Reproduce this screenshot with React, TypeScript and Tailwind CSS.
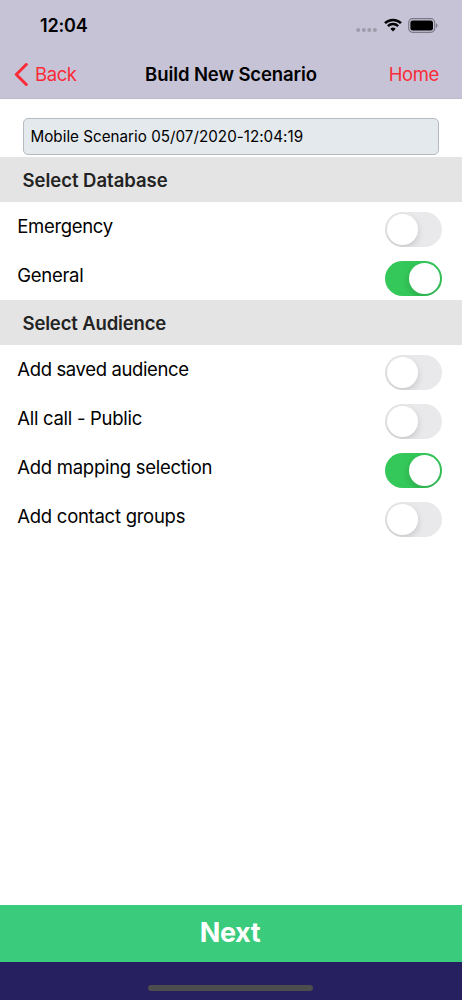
import React, { useState } from 'react';

const databases = [
  { id: 'emergency', label: 'Emergency', on: false, tracking: 'tracking-[-0.33px]' },
  { id: 'general', label: 'General', on: true, tracking: 'tracking-[-0.3px]' },
];

const audiences = [
  { id: 'saved', label: 'Add saved audience', on: false, tracking: 'tracking-[-0.37px]' },
  { id: 'public', label: 'All call - Public', on: false, tracking: 'tracking-[-0.29px]' },
  { id: 'mapping', label: 'Add mapping selection', on: true, tracking: 'tracking-[-0.28px]' },
  { id: 'groups', label: 'Add contact groups', on: false, tracking: 'tracking-[-0.27px]' },
];

const StatusBar: React.FC = () => {
  return <div className="flex h-[50px] items-center justify-between pl-10 pr-[24px]">
      <span className="pt-[2px] text-[18px] font-semibold leading-none tracking-[-0.2px]">12:04</span>
      <div className="flex items-center">
        <svg className="mt-[9px] h-[5px] w-[22px]" viewBox="0 0 22 5" fill="#9e9bab">
          <circle cx="2.2" cy="2.9" r="2" />
          <circle cx="7.8" cy="2.9" r="2" />
          <circle cx="13.3" cy="2.9" r="2" />
          <circle cx="18.9" cy="2.9" r="2" />
        </svg>
        <svg className="ml-[5.5px] h-[14px] w-[18px]" viewBox="0 0 18 14" fill="none" stroke="#000" strokeWidth="2.5">
          <path d="M1 5.2a11.3 11.3 0 0 1 16 0" />
          <path d="M3.9 8.2a7.2 7.2 0 0 1 10.2 0" />
          <path d="M9 13.5 6.3 10.8a3.8 3.8 0 0 1 5.4 0Z" fill="#000" stroke="none" />
        </svg>
        <svg className="ml-[6.5px] h-[15px] w-[30px]" viewBox="0 0 30 15">
          <rect x="0.7" y="0.7" width="26" height="13.6" rx="4" fill="none" stroke="#7b7986" strokeWidth="1.2" />
          <rect x="2.4" y="2.4" width="22.6" height="10.2" rx="2.4" fill="#000" />
          <path d="M28 5.2c2 .8 2 3.8 0 4.6Z" fill="#7b7986" />
        </svg>
      </div>
    </div>;
};

const NavBar: React.FC = () => {
  return <div className="grid h-[49px] grid-cols-[1fr_auto_1fr] items-center px-[14px] text-[18.5px] leading-none">
      <button className="flex items-center gap-[7px] text-[#fb2b37]">
        <svg className="h-6 w-[14px]" viewBox="0 0 14 24" fill="none" stroke="currentColor" strokeWidth="3" strokeLinecap="round" strokeLinejoin="round">
          <path d="M12.3 1.5 2.3 11.5l10 10" />
        </svg>
        <span className="tracking-[-0.4px]">Back</span>
      </button>
      <h1 className="text-[18.5px] font-semibold tracking-[-0.1px]">Build New Scenario</h1>
      <button className="mr-[9px] justify-self-end tracking-[-0.4px] text-[#fb2b37]">Home</button>
    </div>;
};

const SectionHeader: React.FC<{ title: string; className: string }> = ({ title, className }) => {
  return <div className={`flex h-[45px] items-center bg-[#e4e4e4] pl-[22.5px] ${className}`}>
      <h2 className="pt-px text-[18.5px] font-semibold leading-none text-[#232323]">{title}</h2>
    </div>;
};

const ToggleRow: React.FC<{ label: string; initial: boolean; tracking: string }> = ({ label, initial, tracking }) => {
  const [on, setOn] = useState(initial);
  return <li className="flex h-[49px] items-start justify-between pl-[17.3px] pr-[20.3px] pt-[10px]">
      <span className={`pt-px text-[18.5px] leading-[26px] ${tracking}`}>{label}</span>
      <button role="switch" aria-checked={on} aria-label={label} onClick={() => setOn(!on)} className={`flex h-[35px] w-[57px] items-center overflow-hidden rounded-full px-[2px] ${on ? 'justify-end bg-[#34c759]' : 'justify-start bg-[#e9e9eb]'}`}>
        <span className="h-[31px] w-[31px] rounded-full bg-white shadow-[0_3px_7px_rgba(0,0,0,0.15)]"></span>
      </button>
    </li>;
};

export default function App() {
  const [name, setName] = useState('Mobile Scenario 05/07/2020-12:04:19');
  return <div className="flex h-screen w-full flex-col bg-white font-['Inter',sans-serif] text-black">
      <header className="h-[99px] border-b border-[#bdbbc9] bg-[#c6c3d7]">
        <StatusBar />
        <NavBar />
      </header>
      <main className="flex-1">
        <div className="px-[23px] pb-[2px] pt-[19px]">
          <input value={name} onChange={e => setName(e.target.value)} className="block h-[37px] w-full rounded-[5px] border border-[#b4babf] bg-[#e3e9ed] px-[6.5px] text-[15.2px] tracking-[0.02px] outline-none" />
        </div>
        <SectionHeader title="Select Database" className="tracking-[-0.02px]" />
        <ul>
          {databases.map(item => <ToggleRow key={item.id} label={item.label} initial={item.on} tracking={item.tracking} />)}
        </ul>
        <SectionHeader title="Select Audience" className="tracking-[-0.15px]" />
        <ul>
          {audiences.map(item => <ToggleRow key={item.id} label={item.label} initial={item.on} tracking={item.tracking} />)}
        </ul>
      </main>
      <button className="h-[57px] bg-[#3bcb7c] pb-[2px] pr-[2px] text-[27px] font-bold leading-none tracking-[-0.4px] text-white">Next</button>
      <footer className="flex h-[38px] items-end justify-center bg-[#262060] pb-[9px]">
        <div className="mr-px h-[6px] w-[165px] rounded-full bg-[#4d4d4d]"></div>
      </footer>
    </div>;
}
